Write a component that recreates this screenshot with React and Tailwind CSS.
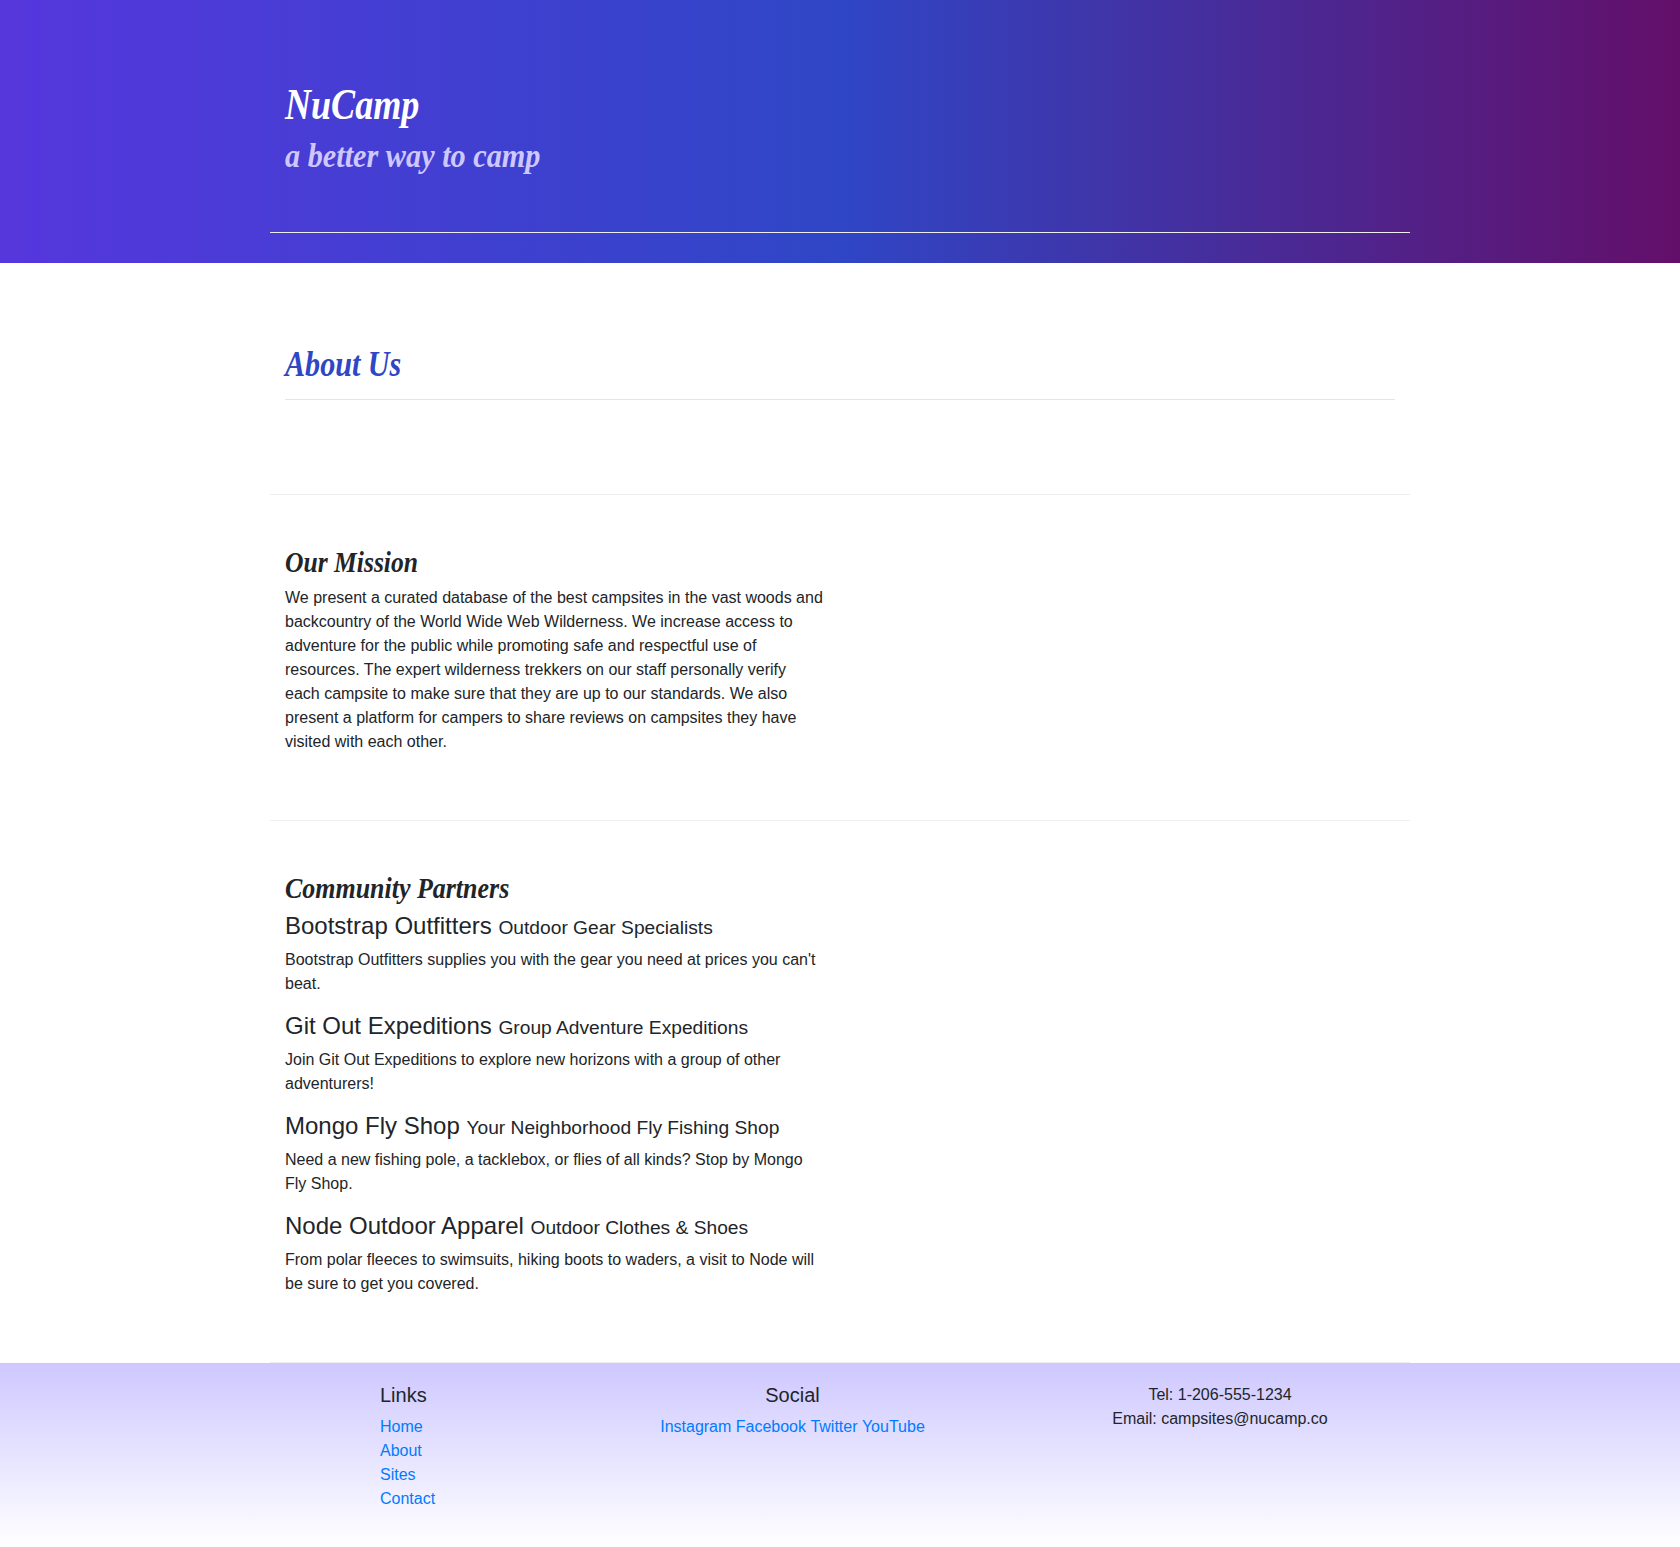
const partners = [
  { name: "Bootstrap Outfitters", tag: "Outdoor Gear Specialists", text: "Bootstrap Outfitters supplies you with the gear you need at prices you can't beat." },
  { name: "Git Out Expeditions", tag: "Group Adventure Expeditions", text: "Join Git Out Expeditions to explore new horizons with a group of other adventurers!" },
  { name: "Mongo Fly Shop", tag: "Your Neighborhood Fly Fishing Shop", text: "Need a new fishing pole, a tacklebox, or flies of all kinds? Stop by Mongo Fly Shop." },
  { name: "Node Outdoor Apparel", tag: "Outdoor Clothes & Shoes", text: "From polar fleeces to swimsuits, hiking boots to waders, a visit to Node will be sure to get you covered." },
];

const links = ["Home", "About", "Sites", "Contact"];
const social = ["Instagram", "Facebook", "Twitter", "YouTube"];

function Script({ as: Tag = "h2", className, children }) {
  return (
    <Tag className={`mb-2 w-max origin-left whitespace-nowrap font-['Liberation_Serif',serif] font-bold italic ${className}`}>
      {children}
    </Tag>
  );
}

export default function App() {
  return (
    <div className="min-h-[1547px] bg-white font-['Liberation_Sans',Arial,sans-serif] text-base text-[#212529]">
      <header className="mb-8 h-[263px] bg-[linear-gradient(to_right,#5637dd,#2f46c6,#630f69)] pt-[30px]">
        <div className="mx-auto h-[203px] w-[1140px] border-b border-[#eeeeee] px-[15px] pt-[50px]">
          <Script as="h1" className="translate-y-px scale-x-[0.82] text-[44px] leading-[48px] text-white">NuCamp</Script>
          <Script className="translate-y-px scale-x-[0.89] text-[34px] leading-[38px] text-[#cec8ff]">a better way to camp</Script>
        </div>
      </header>

      <main className="mx-auto w-[1140px]">
        <section className="h-[200px] border-b border-[#eeeeee] px-[15px] pt-[50px]">
          <Script className="translate-y-px scale-x-[0.86] text-[35px] leading-[38px] text-[#2f46c6]">About Us</Script>
          <hr className="mt-4 border-t border-black/10" />
        </section>

        <section className="border-b border-[#eeeeee] py-[50px] pl-[15px]">
          <Script className="scale-x-[0.853] text-[30px] leading-[33px]">Our Mission</Script>
          <p className="mb-4 w-[540px] leading-6">
            We present a curated database of the best campsites in the vast woods and backcountry of the
            World Wide Web Wilderness. We increase access to adventure for the public while promoting safe
            and respectful use of resources. The expert wilderness trekkers on our staff personally verify
            each campsite to make sure that they are up to our standards. We also present a platform for
            campers to share reviews on campsites they have visited with each other.
          </p>
        </section>

        <section className="border-b border-[#eeeeee] py-[50px] pl-[15px]">
          <Script className="scale-x-[0.865] text-[30px] leading-[33px]">Community Partners</Script>
          {partners.map((p) => (
            <article key={p.name} className="mb-4 w-[540px]">
              <h3 className="mb-2 h-7 text-2xl leading-7">
                {p.name} <small className="text-[19.2px]">{p.tag}</small>
              </h3>
              <p className="leading-6">{p.text}</p>
            </article>
          ))}
        </section>
      </main>

      <footer className="bg-linear-to-b from-[#cec8ff] to-white py-5">
        <div className="mx-auto flex w-[1140px] pl-[95px] leading-6">
          <div className="w-[190px] px-[15px]">
            <h5 className="mb-2 text-xl leading-6">Links</h5>
            <ul className="mb-4">
              {links.map((l) => (
                <li key={l}><a href="#" className="text-[#007bff]">{l}</a></li>
              ))}
            </ul>
          </div>
          <div className="w-[475px] text-center">
            <h5 className="mb-2 text-xl leading-6">Social</h5>
            <div className="flex justify-center gap-[4.4px] text-[#007bff]">
              {social.map((s) => <a key={s} href="#">{s}</a>)}
            </div>
          </div>
          <div className="w-[380px] text-center">
            <p>Tel: 1-206-555-1234</p>
            <p>Email: campsites@nucamp.co</p>
          </div>
        </div>
      </footer>
    </div>
  );
}
